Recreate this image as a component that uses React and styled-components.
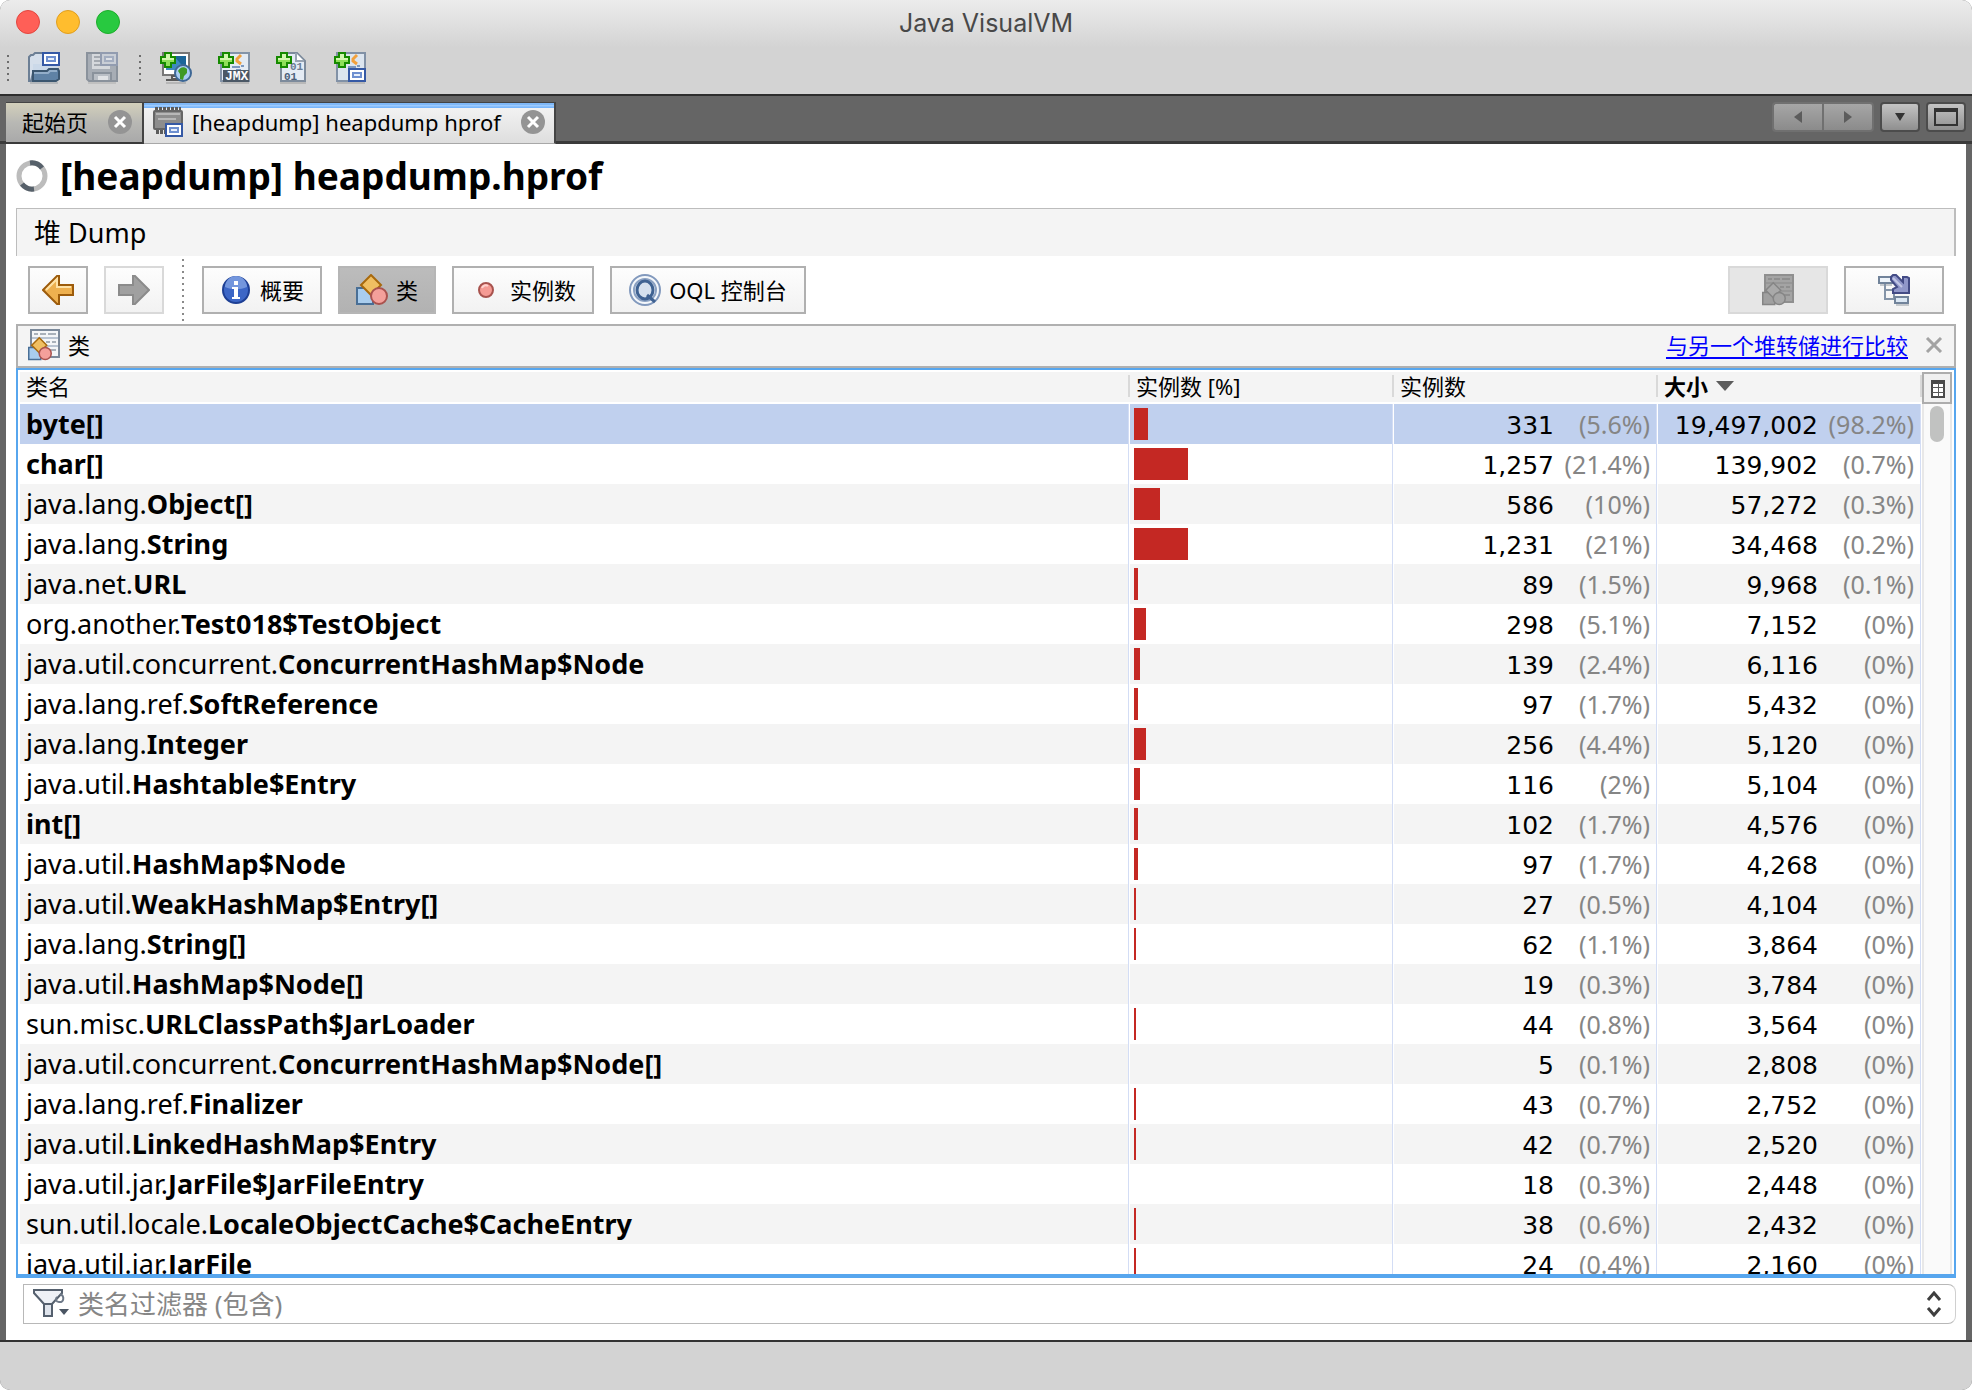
import React from "react";
import styled, { createGlobalStyle } from "styled-components";

const GlobalStyle = createGlobalStyle`
  * { box-sizing: border-box; }
  body { margin: 0; background: #ffffff; }
  button, input { font: inherit; color: inherit; margin: 0; padding: 0; }
  svg { display: block; flex: none; }
`;

const sans = `"Noto Sans", "Noto Sans CJK SC", sans-serif`;

/* ---------- window chrome ---------- */

const Window = styled.div`
  display: flex;
  flex-direction: column;
  height: 100vh;
  overflow: hidden;
  border-radius: 10px;
  background: #656565;
  color: #000;
  font-family: ${sans};
  font-size: 22px;
`;

const Chrome = styled.header`
  flex: none;
  background: linear-gradient(#ececec, #d3d3d3 48px);
  border-bottom: 2px solid #2d2d2d;
`;

const TitleBar = styled.div`
  display: grid;
  grid-template-columns: 1fr auto 1fr;
  align-items: center;
  height: 44px;
  padding: 0 16px;
`;

const Lights = styled.div`
  display: flex;
  gap: 16px;
`;

const Light = styled.button`
  width: 24px;
  height: 24px;
  border-radius: 50%;
  border: 1px solid ${(p) => p.$edge};
  background: ${(p) => p.$fill};
`;

const WindowTitle = styled.div`
  padding-top: 2px;
  font-family: Inter, sans-serif;
  font-size: 25px;
  line-height: 32px;
  color: #484848;
`;

const MainToolbar = styled.div`
  display: flex;
  align-items: center;
  height: 50px;
  padding: 0 6px 2px;
`;

const Grip = styled.span`
  width: 4px;
  height: 28px;
  margin-right: 5px;
  margin-left: ${(p) => (p.$spaced ? 7 : 0)}px;
  background: radial-gradient(circle at 2px 2px, #6d6d6d 1px, transparent 1px) 0 0 / 4px 6px;
`;

const IconButton = styled.button`
  display: flex;
  align-items: center;
  justify-content: center;
  width: 58px;
  height: 40px;
  border: 0;
  background: none;
`;

/* ---------- document tabs ---------- */

const TabStrip = styled.nav`
  flex: none;
  display: flex;
  justify-content: space-between;
  align-items: flex-start;
  height: 48px;
  padding: 6px 6px 0;
  background: linear-gradient(#656565 45px, #3a3a3a 45px);
`;

const Tabs = styled.div`
  display: flex;
`;

const Tab = styled.div`
  display: flex;
  align-items: center;
  height: 42px;
  border: 1px solid #444;
  border-width: 1px 2px 1px 0;
  background: ${(p) =>
    p.$active
      ? "linear-gradient(#7fb8f7 2px, #a6d0ff 2px, #6fb0fa 5px, #f2f2f2 5px, #dedede)"
      : "linear-gradient(#d3d0bb, #b8b8b4 50%, #a9a9a9)"};
  border-bottom: ${(p) => (p.$active ? "1px solid #a8a8a8" : "2px solid #3a3a3a")};
  padding: ${(p) => (p.$active ? "0 9px 2px 8px" : "0 10px 2px 16px")};
`;

const TabLabel = styled.button`
  display: flex;
  align-items: center;
  gap: 8px;
  border: 0;
  background: none;
  font-size: 22px;
  line-height: 32px;
  white-space: nowrap;
`;

const TabClose = styled.button`
  display: flex;
  margin-left: 20px;
  border: 0;
  background: none;
`;

const StripControls = styled.div`
  display: flex;
  gap: 6px;
`;

const Pair = styled.div`
  display: flex;
`;

const StripButton = styled.button`
  display: flex;
  align-items: center;
  justify-content: center;
  width: ${(p) => p.$width || 40}px;
  height: 30px;
  border: 2px solid ${(p) => (p.disabled ? "#707070" : "#4c4c4c")};
  border-radius: 4px;
  background: ${(p) =>
    p.disabled ? "linear-gradient(#a6a6a6, #8b8b8b)" : "linear-gradient(#c4c4c4, #8f8f8f)"};
  ${Pair} &:first-child { border-radius: 4px 0 0 4px; border-right-width: 0; }
  ${Pair} &:last-child { border-radius: 0 4px 4px 0; }
`;

/* ---------- document ---------- */

const Document = styled.main`
  flex: 1;
  min-height: 0;
  display: flex;
  flex-direction: column;
  margin: 0 6px;
  padding: 0 10px 15px;
  background: #fff;
`;

const Heading = styled.div`
  display: flex;
  align-items: center;
  gap: 12px;
  height: 64px;
`;

const HeadingText = styled.h1`
  margin: 0;
  font-size: 37px;
  line-height: 48px;
  font-weight: 700;
`;

const SectionBar = styled.h2`
  display: flex;
  align-items: center;
  height: 48px;
  margin: 0;
  padding: 0 17px 3px;
  border: 1px solid #bdbdbd;
  border-width: 1px 2px 0 1px;
  background: #f4f4f4;
  font-size: 27px;
  font-weight: 400;
`;

const ViewToolbar = styled.div`
  display: flex;
  align-items: center;
  gap: 16px;
  height: 68px;
  padding: 0 12px;
`;

const Divider = styled.span`
  width: 2px;
  height: 62px;
  margin: 0 2px;
  background: repeating-linear-gradient(#8a8a8a 0 2px, transparent 2px 6px);
`;

const Spacer = styled.span`
  flex: 1;
`;

const ViewButton = styled.button`
  display: flex;
  align-items: center;
  justify-content: center;
  gap: 8px;
  height: 48px;
  min-width: ${(p) => p.$width || 60}px;
  padding: 0 12px;
  border: 2px solid ${(p) => (p.disabled ? "#d9d9d9" : p.$active ? "#b6b6b6" : "#b0b0b0")};
  background: ${(p) =>
    p.$active
      ? "linear-gradient(#bcbcbc, #b2b2b2)"
      : p.$muted
      ? "#e6e6e6"
      : "linear-gradient(#fdfdfd, #f2f2f2)"};
  font-size: 22px;
  line-height: 32px;
  white-space: nowrap;
  color: #000;
`;

const PanelHeader = styled.div`
  display: flex;
  align-items: center;
  gap: 8px;
  flex: none;
  height: 44px;
  padding: 0 10px 2px;
  border: 2px solid #b0b0b0;
  background: #f4f4f4;
  font-size: 22px;
  line-height: 32px;
`;

const CompareLink = styled.a`
  margin-left: auto;
  color: #0000fe;
  text-decoration: underline;
  text-decoration-thickness: 2px;
  text-underline-offset: 3px;
`;

const PlainButton = styled.button`
  display: flex;
  align-items: center;
  justify-content: center;
  border: 0;
  background: none;
`;

const PanelClose = styled(PlainButton)`
  width: 20px;
  height: 20px;
  margin-left: 8px;
`;

/* ---------- class table ---------- */

const TableFrame = styled.div`
  flex: 1;
  min-height: 0;
  display: flex;
  overflow: hidden;
  padding: 2px 2px 0;
  border: 2px solid #57a6ee;
  border-bottom-width: 4px;
`;

const Viewport = styled.div`
  flex: 1;
  min-width: 0;
  overflow: hidden;
`;

const Table = styled.table`
  width: 100%;
  table-layout: fixed;
  border-collapse: separate;
  border-spacing: 0;
`;

const Col = styled.col`
  width: ${(p) => p.$width};
`;

const HeadCell = styled.th`
  height: 32px;
  padding: 0 0 2px;
  background: #f4f4f4;
  border-bottom: 2px solid #fff;
  text-align: left;
  font-weight: ${(p) => (p.$sorted ? 700 : 400)};
`;

const SortButton = styled.button`
  display: flex;
  align-items: center;
  gap: 8px;
  width: 100%;
  height: 22px;
  border: 0;
  border-right: 2px solid #d9d9d9;
  background: none;
  padding: 0 6px;
  font-size: 22px;
  line-height: 22px;
  white-space: nowrap;
`;

const Row = styled.tr`
  background: ${(p) => (p.$selected ? "#c0d0ee" : p.$odd ? "#ffffff" : "#f4f4f4")};
`;

const Cell = styled.td`
  height: 40px;
  padding: 0 6px;
  box-shadow: inset -1px 0 #fff, inset -2px 0 #d3ddf5;
  vertical-align: baseline;
  white-space: nowrap;
  overflow: hidden;
  font-size: 27px;
  line-height: 40px;
`;

const BarCell = styled(Cell)`
  padding: 4px;
  vertical-align: top;
`;

const Bar = styled.div`
  height: 32px;
  background: #c42823;
`;

const NumberCell = styled(Cell)`
  padding: 0 8px 0 0;
  text-align: right;
  font-family: "DejaVu Sans", sans-serif;
  font-size: 25px;
  line-height: 32px;
`;

const Share = styled.span`
  display: inline-block;
  width: 96px;
  font-family: ${sans};
  font-size: 25px;
  line-height: 28px;
  color: #858585;
`;

const ScrollColumn = styled.div`
  flex: none;
  display: flex;
  flex-direction: column;
  width: 30px;
`;

const ColumnsButton = styled.button`
  display: flex;
  align-items: center;
  justify-content: center;
  flex: none;
  height: 32px;
  padding: 2px 0 0 2px;
  border: 2px solid #adadad;
  background: #f0f0f0;
`;

const Track = styled.div`
  flex: 1;
  padding: 2px 6px;
  border: solid #e8e8e8;
  border-width: 0 2px;
  background: #fafafa;
`;

const Thumb = styled.div`
  height: 36px;
  border-radius: 8px;
  background: #c1c2c1;
`;

/* ---------- filter ---------- */

const FilterBar = styled.div`
  display: flex;
  align-items: center;
  flex: none;
  height: 40px;
  margin: 6px 0 1px 7px;
  padding-left: 8px;
  border: 1px solid #b8b8b8;
  border-right-color: #d0d0d0;
  border-radius: 0 8px 8px 0;
`;

const FilterInput = styled.input`
  flex: 1;
  min-width: 0;
  height: 36px;
  padding: 0 8px 1px;
  border: 0;
  outline: 0;
  background: none;
  font-size: 26px;
  &::placeholder { color: #868686; opacity: 1; }
`;

const HistoryButton = styled(PlainButton)`
  width: 42px;
  height: 36px;
`;

const StatusBar = styled.footer`
  flex: none;
  height: 50px;
  border-top: 2px solid #333;
  background: #d3d3d3;
`;

/* ---------- icons ---------- */

const Svg = ({ w = 32, h = 32, children, ...rest }) => (
  <svg width={w} height={h} viewBox={`0 0 ${w} ${h}`} aria-hidden="true" {...rest}>
    {children}
  </svg>
);

const SnapshotBadge = ({ x, y }) => (
  <g>
    <rect x={x + 1} y={y + 1} width="16" height="12" fill="#fff" stroke="#3559a5" strokeWidth="2" />
    <rect x={x + 5} y={y + 5} width="8" height="4" fill="#e6eefb" stroke="#6d8fd0" strokeWidth="2" />
  </g>
);

const Plus = () => (
  <g>
    <path d="M5 1h6v4h4v6h-4v4H5v-4H1V5h4z" fill="#8fe05a" stroke="#168a00" strokeWidth="2" />
    <path d="M6 2h4v4h4v2H2V6h4z" fill="#d2f7b0" />
  </g>
);

const JavaCup = () => (
  <g fill="none" strokeWidth="3">
    <path d="M23 3l-4 4v2l4 3" stroke="#f2a03c" />
    <path d="M14 15h8M18 18h5" stroke="#7c98bf" strokeWidth="2" />
    <path d="M23 14h3" stroke="#7c98bf" strokeWidth="2" />
  </g>
);

const OpenIcon = () => (
  <Svg>
    <path d="M2 30h28v2H2z" fill="#b4b7ba" />
    <path d="M1 5l2-2h2l2-2h8v18H7l-2 2-2 8H1z" fill="#d5dfeb" stroke="#6c7f95" strokeWidth="2" />
    <path d="M5 12h25v7H5z" fill="#cbd9e9" />
    <path d="M5 19h14l2-2h9l1 2v8l-3 2H5z" fill="#5f82a5" stroke="#3b566f" strokeWidth="2" />
    <path d="M6 21h14l2-2h7" stroke="#93aec9" strokeWidth="2" fill="none" />
    <SnapshotBadge x={14} y={0} />
  </Svg>
);

const SaveIcon = () => (
  <Svg>
    <path d="M2 30h28v2H2z" fill="#c0c0c0" />
    <path d="M1 1h30v28H3l-2-2z" fill="#a7adb5" stroke="#8a929c" strokeWidth="2" />
    <rect x="6" y="2" width="18" height="15" fill="#d5d8dc" />
    <path d="M8 5h6M8 9h6M8 13h14" stroke="#a4a9b0" strokeWidth="2" />
    <rect x="15" y="1" width="16" height="12" fill="#c9ced6" stroke="#929cb0" strokeWidth="2" />
    <rect x="19" y="5" width="8" height="4" fill="#dde0e6" stroke="#a3adc0" strokeWidth="2" />
    <rect x="7" y="21" width="18" height="8" fill="#b9bec5" stroke="#8a929c" strokeWidth="2" />
    <rect x="12" y="24" width="10" height="4" fill="#e0e2e5" />
  </Svg>
);

const RemoteIcon = () => (
  <Svg>
    <path d="M6 30h20v2H6z" fill="#b6b6b6" />
    <rect x="3" y="1" width="26" height="22" fill="#fff" stroke="#777" strokeWidth="2" />
    <rect x="6" y="4" width="20" height="14" fill="#3d8abf" />
    <path d="M26 4v14L14 4z" fill="#1c6699" />
    <path d="M12 24h6v3h-6zM6 28h14" stroke="#5a5a5a" strokeWidth="2" fill="#e9e9e9" />
    <circle cx="23" cy="21" r="8" fill="#a9cdf2" stroke="#3d6795" strokeWidth="2" />
    <path d="M18 19c2-4 6-5 9-2v4l-3 3-1 4-3-1v-5z" fill="#3f9a25" />
    <Plus />
  </Svg>
);

const JmxIcon = () => (
  <Svg overflow="visible">
    <path d="M3 30h28v2H3z" fill="#b8b8b8" />
    <rect x="3" y="1" width="28" height="28" fill="#e4ebf3" stroke="#8494a8" strokeWidth="2" />
    <JavaCup />
    <rect x="5" y="18" width="26" height="12" fill="#4b5866" />
    <text x="7" y="28" fontFamily="Liberation Mono, monospace" fontWeight="700" fontSize="13" fill="#fff">JMX</text>
    <Plus />
  </Svg>
);

const CoreDumpIcon = () => (
  <Svg>
    <path d="M4 30h26v2H4z" fill="#b8b8b8" />
    <path d="M5 1h16l8 8v20H5z" fill="#e4ebf4" stroke="#7d8b9c" strokeWidth="2" />
    <path d="M20 1v8h8" fill="#fff" stroke="#98a4b3" strokeWidth="2" />
    <text x="14" y="18" fontFamily="Liberation Mono, monospace" fontWeight="700" fontSize="11" fill="#6b7d95">01</text>
    <text x="8" y="28" fontFamily="Liberation Mono, monospace" fontWeight="700" fontSize="11" fill="#4c607a">01</text>
    <Plus />
  </Svg>
);

const AppSnapshotIcon = () => (
  <Svg>
    <path d="M3 30h28v2H3z" fill="#b8b8b8" />
    <rect x="3" y="1" width="28" height="28" fill="#dce5ef" stroke="#8191a6" strokeWidth="2" />
    <JavaCup />
    <SnapshotBadge x={14} y={16} />
    <Plus />
  </Svg>
);

const HeapIcon = () => (
  <Svg>
    <path d="M3 3h26M4 26h10" stroke="#5c5c5c" strokeWidth="4" strokeDasharray="3 1" />
    <rect x="2" y="5" width="28" height="18" rx="1" fill="#8d8d8d" stroke="#666" strokeWidth="2" />
    <path d="M4 8h24M6 13h18" stroke="#b7b7b7" strokeWidth="2" />
    <SnapshotBadge x={13} y={17} />
  </Svg>
);

const CloseDisc = () => (
  <Svg w={24} h={24}>
    <circle cx="12" cy="12" r="12" fill="#949494" />
    <path d="M7 7l10 10M17 7L7 17" stroke="#fff" strokeWidth="3" />
  </Svg>
);

const Spinner = () => (
  <Svg>
    <circle cx="16" cy="16" r="13" fill="none" stroke="#bcbcbc" strokeWidth="5" />
    <path d="M14 3a13 13 0 0 1 12 5" fill="none" stroke="#56606a" strokeWidth="5" />
    <path d="M18 29a13 13 0 0 1-12-5" fill="none" stroke="#56606a" strokeWidth="5" />
  </Svg>
);

const BackIcon = () => (
  <Svg>
    <path d="M1 16L15 2h2v9h14v10H17v9h-2z" fill="#eeb04f" stroke="#9c5b0b" strokeWidth="2" />
    <path d="M4 16L15 5v8h14" fill="none" stroke="#ffe2a6" strokeWidth="2" />
  </Svg>
);

const ForwardIcon = () => (
  <Svg>
    <path d="M31 16L17 2h-2v9H1v10h14v9h2z" fill="#a0a0a0" stroke="#8b8b8b" strokeWidth="2" />
  </Svg>
);

const InfoIcon = () => (
  <Svg>
    <circle cx="16" cy="16" r="13" fill="#3c66c6" stroke="#1d3f94" strokeWidth="2" />
    <path d="M5 13a11 11 0 0 1 22 0c-7 3-15 3-22 0z" fill="#7396dd" />
    <path d="M14 7h4v4h-4zM12 13h6v10h2v2h-8v-2h2v-8h-2z" fill="#fff" />
  </Svg>
);

const Shapes = ({ gray }) => (
  <g strokeWidth="2">
    <rect x="1" y="14" width="16" height="16" fill={gray ? "#a0a0a0" : "#a9cdee"} stroke={gray ? "#858585" : "#496f96"} />
    <path d="M15 1l10 10-10 10L5 11z" fill={gray ? "#a9a9a9" : "#f0bf62"} stroke={gray ? "#858585" : "#a8690d"} />
    <circle cx="23" cy="22" r="8" fill={gray ? "#a5a5a5" : "#f4a09b"} stroke={gray ? "#858585" : "#a9524e"} />
  </g>
);

const ClassIcon = () => (
  <Svg>
    <Shapes />
  </Svg>
);

const ClassListIcon = ({ gray }) => (
  <Svg>
    <rect x="3" y="1" width="28" height="27" fill={gray ? "#a4a4a4" : "#f4f6f8"} stroke={gray ? "#8f8f8f" : "#7c8a9b"} strokeWidth="2" />
    <path d="M6 5h4M12 5h6M20 5h8M18 13h4M24 13h4M22 21h6" stroke={gray ? "#8f8f8f" : "#a9b1ba"} strokeWidth="2" />
    <path d="M4 9h26M4 17h26" stroke={gray ? "#979797" : "#b9c4d2"} strokeWidth="2" />
    <g transform="translate(0 8) scale(0.75)">
      <Shapes gray={gray} />
    </g>
  </Svg>
);

const InstanceIcon = () => (
  <Svg>
    <circle cx="16" cy="16" r="7" fill="#f59b94" stroke="#a8534e" strokeWidth="2" />
    <path d="M12 14a4 4 0 0 1 6-2" stroke="#ffd3cf" strokeWidth="2" fill="none" />
  </Svg>
);

const QueryIcon = () => (
  <Svg>
    <circle cx="16" cy="16" r="15" fill="#f4f7fb" stroke="#8299bd" strokeWidth="2" />
    <circle cx="16" cy="16" r="11" fill="none" stroke="#8ba1c2" strokeWidth="2" />
    <ellipse cx="16" cy="16" rx="8" ry="9" fill="#d5e0ee" stroke="#3f6292" strokeWidth="3" />
    <path d="M18 21l8 7" stroke="#3f6292" strokeWidth="3" />
  </Svg>
);

const TreeIcon = () => (
  <Svg>
    <path d="M2 10h12v2H2zM18 30h13v2H18z" fill="#c4c8cc" />
    <path d="M7 9v16h10M7 16h9v8" fill="none" stroke="#8494a8" strokeWidth="2" />
    <rect x="1" y="3" width="14" height="6" fill="#eef4fa" stroke="#71839a" strokeWidth="2" />
    <rect x="17" y="23" width="13" height="6" fill="#dbe7f3" stroke="#71839a" strokeWidth="2" />
    <path d="M13 3l2-2h3l7 7V3h4l2 1v15H15v-4l4-2-6-7z" fill="#9097c9" stroke="#434b85" strokeWidth="2" />
    <path d="M15 4l9 9" stroke="#c3c8e6" strokeWidth="2" />
  </Svg>
);

const CrossIcon = () => (
  <Svg w={18} h={16}>
    <path d="M2 1l14 14M16 1L2 15" stroke="#a3a3a3" strokeWidth="3" />
  </Svg>
);

const SortArrow = () => (
  <Svg w={18} h={12}>
    <path d="M0 1h18L9 11z" fill="#5c5c5c" />
  </Svg>
);

const ColumnsIcon = () => (
  <Svg w={14} h={18} shapeRendering="crispEdges">
    <rect x="1" y="1" width="12" height="16" fill="#fff" stroke="#4a4a4a" strokeWidth="2" />
    <path d="M1 3h12" stroke="#4a4a4a" strokeWidth="2" />
    <path d="M1 7h12M1 12h12M7 3v14" stroke="#5a5a5a" strokeWidth="1" />
  </Svg>
);

const FilterIcon = () => (
  <Svg w={38} h={32}>
    <path d="M2 2h28v3L20 16v12h-8V16L2 5z" fill="#eef1f6" stroke="#55606e" strokeWidth="2" />
    <path d="M12 16h8v12h-8z" fill="#dfe4ec" stroke="#55606e" strokeWidth="2" />
    <path d="M28 6c5 2 4 9-1 8-3 0-4-3-2-5" fill="none" stroke="#6e7988" strokeWidth="2" />
    <path d="M27 21h10l-5 6z" fill="#4a5563" />
  </Svg>
);

const UpDownIcon = () => (
  <Svg w={16} h={26}>
    <path d="M2 9l6-7 6 7M2 17l6 7 6-7" fill="none" stroke="#3f3f3f" strokeWidth="3" />
  </Svg>
);

const Triangle = ({ d, dark }) => (
  <Svg w={12} h={12}>
    <path d={d} fill={dark ? "#333" : "#5c5c5c"} />
  </Svg>
);

const MaximizeIcon = () => (
  <Svg w={24} h={18} shapeRendering="crispEdges">
    <rect x="1" y="2" width="22" height="15" fill="none" stroke="#333" strokeWidth="2" />
    <path d="M0 2h24" stroke="#333" strokeWidth="4" />
  </Svg>
);

/* ---------- data ---------- */

const classes = [
  ["", "byte[]", "331", 5.6, "19,497,002", 98.2],
  ["", "char[]", "1,257", 21.4, "139,902", 0.7],
  ["java.lang.", "Object[]", "586", 10, "57,272", 0.3],
  ["java.lang.", "String", "1,231", 21, "34,468", 0.2],
  ["java.net.", "URL", "89", 1.5, "9,968", 0.1],
  ["org.another.", "Test018$TestObject", "298", 5.1, "7,152", 0],
  ["java.util.concurrent.", "ConcurrentHashMap$Node", "139", 2.4, "6,116", 0],
  ["java.lang.ref.", "SoftReference", "97", 1.7, "5,432", 0],
  ["java.lang.", "Integer", "256", 4.4, "5,120", 0],
  ["java.util.", "Hashtable$Entry", "116", 2, "5,104", 0],
  ["", "int[]", "102", 1.7, "4,576", 0],
  ["java.util.", "HashMap$Node", "97", 1.7, "4,268", 0],
  ["java.util.", "WeakHashMap$Entry[]", "27", 0.5, "4,104", 0],
  ["java.lang.", "String[]", "62", 1.1, "3,864", 0],
  ["java.util.", "HashMap$Node[]", "19", 0.3, "3,784", 0],
  ["sun.misc.", "URLClassPath$JarLoader", "44", 0.8, "3,564", 0],
  ["java.util.concurrent.", "ConcurrentHashMap$Node[]", "5", 0.1, "2,808", 0],
  ["java.lang.ref.", "Finalizer", "43", 0.7, "2,752", 0],
  ["java.util.", "LinkedHashMap$Entry", "42", 0.7, "2,520", 0],
  ["java.util.jar.", "JarFile$JarFileEntry", "18", 0.3, "2,448", 0],
  ["sun.util.locale.", "LocaleObjectCache$CacheEntry", "38", 0.6, "2,432", 0],
  ["java.util.jar.", "JarFile", "24", 0.4, "2,160", 0],
];

/* Bars grow in steps of two pixels. */
const barWidth = (share) => 2 * Math.round(share * 1.27);

export default function App() {
  return (
    <Window>
      <GlobalStyle />
      <Chrome>
        <TitleBar>
          <Lights>
            <Light aria-label="关闭" $fill="#ff5f57" $edge="#e2463f" />
            <Light aria-label="最小化" $fill="#ffbd2e" $edge="#e09e1e" />
            <Light aria-label="缩放" $fill="#28c940" $edge="#1dad2b" />
          </Lights>
          <WindowTitle>Java VisualVM</WindowTitle>
        </TitleBar>
        <MainToolbar>
          <Grip />
          <IconButton aria-label="打开"><OpenIcon /></IconButton>
          <IconButton aria-label="保存" disabled><SaveIcon /></IconButton>
          <Grip $spaced />
          <IconButton aria-label="添加远程主机"><RemoteIcon /></IconButton>
          <IconButton aria-label="添加 JMX 连接"><JmxIcon /></IconButton>
          <IconButton aria-label="添加核心 Dump"><CoreDumpIcon /></IconButton>
          <IconButton aria-label="添加应用程序快照"><AppSnapshotIcon /></IconButton>
        </MainToolbar>
      </Chrome>

      <TabStrip>
        <Tabs>
          <Tab>
            <TabLabel>起始页</TabLabel>
            <TabClose aria-label="关闭起始页"><CloseDisc /></TabClose>
          </Tab>
          <Tab $active>
            <TabLabel><HeapIcon />[heapdump] heapdump hprof</TabLabel>
            <TabClose aria-label="关闭 heapdump"><CloseDisc /></TabClose>
          </Tab>
        </Tabs>
        <StripControls>
          <Pair>
            <StripButton $width={50} disabled aria-label="上一个"><Triangle d="M10 0v12L2 6z" /></StripButton>
            <StripButton $width={52} disabled aria-label="下一个"><Triangle d="M2 0v12l8-6z" /></StripButton>
          </Pair>
          <StripButton aria-label="文档列表"><Triangle dark d="M1 2h10L6 10z" /></StripButton>
          <StripButton aria-label="最大化"><MaximizeIcon /></StripButton>
        </StripControls>
      </TabStrip>

      <Document>
        <Heading>
          <Spinner />
          <HeadingText>[heapdump] heapdump.hprof</HeadingText>
        </Heading>
        <SectionBar>堆 Dump</SectionBar>
        <ViewToolbar>
          <ViewButton aria-label="后退"><BackIcon /></ViewButton>
          <ViewButton aria-label="前进" disabled><ForwardIcon /></ViewButton>
          <Divider />
          <ViewButton $width={120}><InfoIcon />概要</ViewButton>
          <ViewButton $active $width={98}><ClassIcon />类</ViewButton>
          <ViewButton $width={142}><InstanceIcon />实例数</ViewButton>
          <ViewButton $width={196}><QueryIcon />OQL 控制台</ViewButton>
          <Spacer />
          <ViewButton aria-label="在类视图中显示" $width={100} $muted disabled><ClassListIcon gray /></ViewButton>
          <ViewButton aria-label="在树中显示" $width={100}><TreeIcon /></ViewButton>
        </ViewToolbar>

        <PanelHeader>
          <ClassListIcon />
          <span>类</span>
          <CompareLink href="#compare">与另一个堆转储进行比较</CompareLink>
          <PanelClose aria-label="关闭面板"><CrossIcon /></PanelClose>
        </PanelHeader>

        <TableFrame>
          <Viewport>
            <Table>
              <colgroup>
                <Col $width="auto" />
                <Col $width="264px" />
                <Col $width="264px" />
                <Col $width="264px" />
              </colgroup>
              <thead>
                <tr>
                  <HeadCell><SortButton>类名</SortButton></HeadCell>
                  <HeadCell><SortButton>实例数 [%]</SortButton></HeadCell>
                  <HeadCell><SortButton>实例数</SortButton></HeadCell>
                  <HeadCell $sorted aria-sort="descending">
                    <SortButton>大小<SortArrow /></SortButton>
                  </HeadCell>
                </tr>
              </thead>
              <tbody>
                {classes.map(([pkg, name, count, share, size, sizeShare], i) => (
                  <Row key={pkg + name} $selected={i === 0} $odd={i % 2 === 1}>
                    <Cell>{pkg}<b>{name}</b></Cell>
                    <BarCell><Bar style={{ width: barWidth(share) }} /></BarCell>
                    <NumberCell>{count}<Share>({share}%)</Share></NumberCell>
                    <NumberCell>{size}<Share>({sizeShare}%)</Share></NumberCell>
                  </Row>
                ))}
              </tbody>
            </Table>
          </Viewport>
          <ScrollColumn>
            <ColumnsButton aria-label="选择列"><ColumnsIcon /></ColumnsButton>
            <Track><Thumb /></Track>
          </ScrollColumn>
        </TableFrame>

        <FilterBar>
          <PlainButton aria-label="过滤器类型"><FilterIcon /></PlainButton>
          <FilterInput aria-label="类名过滤器" placeholder="类名过滤器 (包含)" />
          <HistoryButton aria-label="过滤历史"><UpDownIcon /></HistoryButton>
        </FilterBar>
      </Document>
      <StatusBar />
    </Window>
  );
}
